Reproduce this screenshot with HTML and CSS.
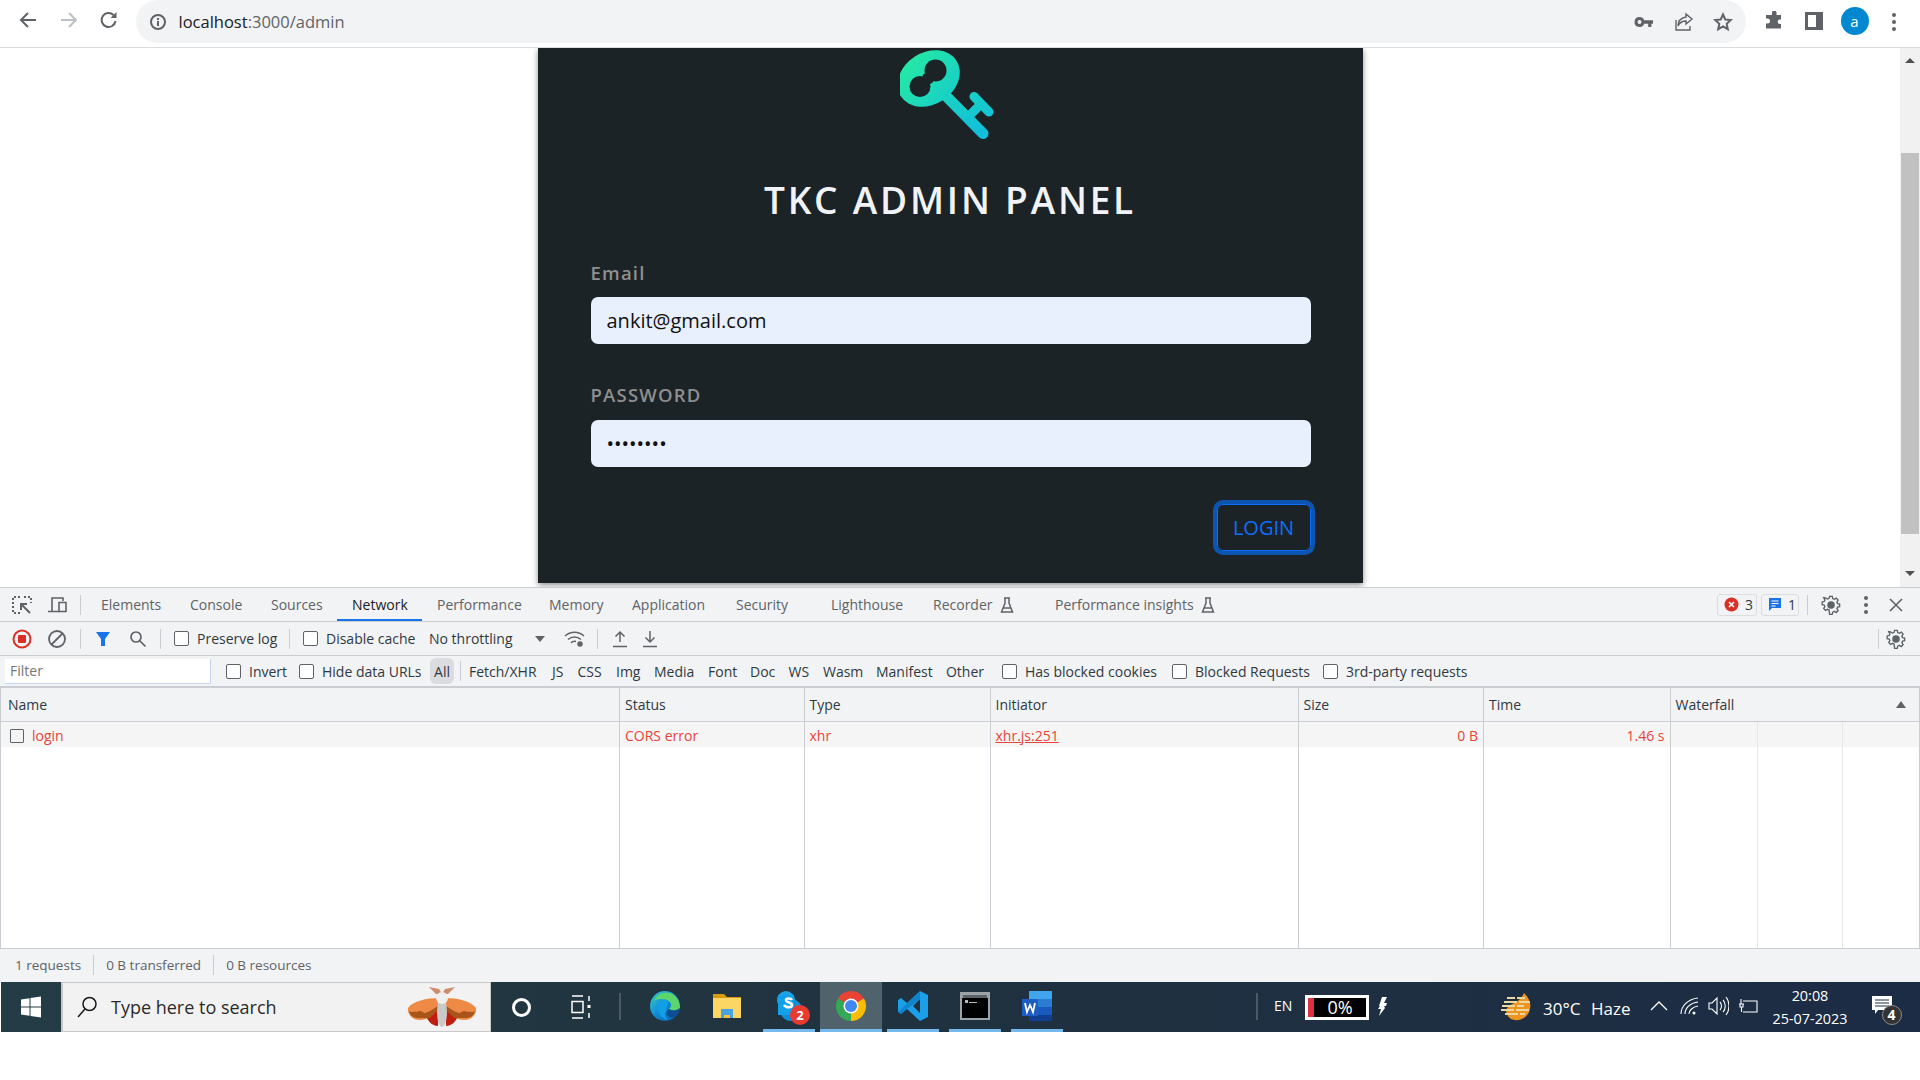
FILE: index.html
```html
<!DOCTYPE html>
<html lang="en">
<head>
  <meta charset="UTF-8" />
  <title>TKC Admin Panel</title>
  <link rel="stylesheet" href="styles.css">
</head>
<body>
  <header class="chrome">
    <span class="nav-btn"><svg width="20" height="20" viewBox="0 0 20 20" fill="none" stroke="#5f6368" stroke-width="2"><path d="M18 10H3M10 3l-7 7 7 7"/></svg></span>
    <span class="nav-btn"><svg width="20" height="20" viewBox="0 0 20 20" fill="none" stroke="#bdc1c6" stroke-width="2"><path d="M2 10h15M10 3l7 7-7 7"/></svg></span>
    <span class="nav-btn"><svg width="20" height="20" viewBox="0 0 20 20" fill="none" stroke="#5f6368" stroke-width="2"><path d="M16.5 11a7 7 0 1 1-2-6"/><path d="M17.5 2v6h-6z" fill="#5f6368" stroke="none"/></svg></span>
    <div class="omnibox">
      <svg class="omni-info" width="18" height="18" viewBox="0 0 18 18" fill="none" stroke="#5f6368" stroke-width="2"><circle cx="9" cy="9" r="7"/><path d="M9 8v5M9 5v2"/></svg>
      <span class="url">localhost<span class="url-rest">:3000/admin</span></span>
      <svg class="omni-key" width="20" height="12" viewBox="0 0 20 12" fill="#5f6368"><path d="M5.5 1a5 5 0 0 1 4.7 3.2H19v3.6h-1.6V11h-3.2V7.8h-4A5 5 0 1 1 5.500 1zm0 3a2 2 0 1 0 0 4 2 2 0 0 0 0-4z"/></svg>
      <svg class="omni-share" width="20" height="20" viewBox="0 0 20 20" fill="none" stroke="#5f6368" stroke-width="1.400"><path d="M2 8v10h14v-4"/><path d="M12 2l6 5-6 5V9c-4 0-6 1-8 5 0-5 3-8 8-9z"/></svg>
      <svg class="omni-star" width="20" height="20" viewBox="0 0 20 20" fill="none" stroke="#5f6368" stroke-width="2"><path d="M10 2.500l2.300 5 5.400.6-4 3.700 1.100 5.400L10 14.500l-4.800 2.700 1.100-5.400-4-3.700 5.400-.6z"/></svg>
    </div>
    <span class="chrome-btn chrome-btn-first"><svg width="20" height="20" viewBox="0 0 20 20" fill="#5f6368"><path d="M8 1.500a2.300 2.300 0 0 1 4.500 0V4H17v4.500h-1.500a2.300 2.300 0 0 0 0 4.500H17v4.500H2v-5h1.500a2.500 2.500 0 0 0 0-5H2V4h6z"/></svg></span>
    <span class="chrome-btn"><svg width="18" height="18" viewBox="0 0 18 18"><path d="M0 0h18v18H0z" fill="#5f6368"/><path d="M3 3h8v12H3z" fill="#fff"/></svg></span>
    <span class="avatar">a</span>
    <span class="chrome-dots"><i></i><i></i><i></i></span>
  </header>

  <div class="viewport">
    <main class="page">
      <section class="card">
        <svg class="logo" width="94" height="89" viewBox="0 0 94 89">
          <defs><linearGradient id="keyFill" gradientUnits="userSpaceOnUse" x1="30" y1="0" x2="60" y2="89"><stop offset="0" stop-color="#24e8a6"/><stop offset="1" stop-color="#11bedb"/></linearGradient></defs>
          <g fill="none" stroke="url(#keyFill)" stroke-linecap="round">
            <path stroke-width="11" d="M46 46 83 83.500"/>
            <path stroke-width="9" d="M74 46.500 89 62M68 67l11-11"/>
          </g>
          <ellipse cx="28.700" cy="28.500" rx="33" ry="26" transform="rotate(-33 28.700 28.500)" fill="url(#keyFill)"/>
          <g fill="#1c2327"><circle cx="35.500" cy="20.500" r="11"/><circle cx="20" cy="36.500" r="10.500"/><circle cx="28" cy="28.500" r="6"/></g>
        </svg>
        <h1 class="card-title">TKC ADMIN PANEL</h1>
        <form class="login-form">
          <label class="field-label" for="email">Email</label>
          <input class="field-input" id="email" type="text" value="ankit@gmail.com" />
          <label class="field-label field-label-pw" for="pw">PASSWORD</label>
          <input class="field-input field-input-pw" id="pw" type="password" value="12345678" />
          <div class="form-actions"><button class="login-btn" type="button">LOGIN</button></div>
        </form>
      </section>
    </main>
    <div class="scrollbar">
      <span class="arrow-up"></span>
      <div class="thumb"></div>
      <span class="arrow-down"></span>
    </div>
  </div>

  <section class="devtools">
    <div class="dt-tabs">
      <div class="dt-tools">
        <svg width="20" height="20" viewBox="0 0 20 20" fill="none" stroke="#5f6368"><path stroke-width="2" stroke-dasharray="2 2" d="M8 2H1v16h7M12 2h7v6"/><path stroke-width="2" d="M9 9l9 9M9 15V9h6"/></svg>
        <svg width="20" height="20" viewBox="0 0 20 20" fill="none" stroke="#5f6368" stroke-width="1.600"><path d="M5 16V3h11v3M1 16.500h11"/><path d="M12 7.500h7v9h-7z"/></svg>
        <span class="dt-sep"></span>
      </div>
      <div class="tab-list">
        <span class="tab">Elements</span>
        <span class="tab">Console</span>
        <span class="tab">Sources</span>
        <span class="tab tab-active">Network</span>
        <span class="tab">Performance</span>
        <span class="tab">Memory</span>
        <span class="tab">Application</span>
        <span class="tab">Security</span>
        <span class="tab">Lighthouse</span>
        <span class="tab">Recorder<svg class="flask" width="14" height="16" viewBox="0 0 14 16" fill="none" stroke="#5f6368" stroke-width="1.500"><path d="M4 1h6M5 1v5L1.500 15h11L9 6V1M3.500 11h7"/></svg></span>
        <span class="tab">Performance insights<svg class="flask" width="14" height="16" viewBox="0 0 14 16" fill="none" stroke="#5f6368" stroke-width="1.500"><path d="M4 1h6M5 1v5L1.500 15h11L9 6V1M3.500 11h7"/></svg></span>
      </div>
      <div class="dt-right">
        <span class="count-badge count-err"><svg width="15" height="15" viewBox="0 0 15 15"><circle cx="7.500" cy="7.500" r="7" fill="#d93025"/><path d="M5 5l5 5M10 5l-5 5" stroke="#fff" stroke-width="1.600"/></svg>3</span>
        <span class="count-badge count-msg"><svg width="14" height="15" viewBox="0 0 14 15"><path d="M1 1h12v10H4l-3 3z" fill="#1a73e8"/><path d="M3.500 4h7M3.500 6.500h7M3.500 9h4" stroke="#fff"/></svg>1</span>
        <span class="dt-sep dt-sep-right"></span>
        <span class="dt-icon dt-gear"><svg width="20" height="20" viewBox="0 0 20 20" fill="none" stroke="#5f6368" stroke-width="1.500"><path d="M8.500 1.500h3l.5 2.500 1.800.8 2.200-1.300 2 2.200-1.300 2.100.7 1.700 2.300.5v3l-2.300.5-.7 1.700 1.300 2.100-2 2.200-2.200-1.300-1.800.8-.5 2.500h-3L8 16.700l-1.800-.8L4 17.200l-2-2.200 1.300-2.100-.7-1.700-2.300-.5v-3l2.300-.5.7-1.700L2 2.900l2 .3 2.200 1.300L8 3.700z" transform="scale(.9) translate(1 0)"/><circle cx="10" cy="10" r="3" fill="#5f6368"/></svg></span>
        <span class="dt-icon dt-more"><i></i><i></i><i></i></span>
        <span class="dt-icon dt-close"><svg width="14" height="14" viewBox="0 0 14 14" stroke="#5f6368" stroke-width="1.600"><path d="M1 1l12 12M13 1L1 13"/></svg></span>
      </div>
    </div>

    <div class="dt-toolbar">
      <span class="dt-icon"><svg width="20" height="20" viewBox="0 0 20 20"><circle cx="10" cy="10" r="8.500" fill="none" stroke="#d93025" stroke-width="2"/><rect x="6" y="6" width="8" height="8" rx="1" fill="#d93025"/></svg></span>
      <span class="dt-icon"><svg width="20" height="20" viewBox="0 0 20 20" fill="none" stroke="#5f6368" stroke-width="1.800"><circle cx="10" cy="10" r="8"/><path d="M15.500 4.500l-11 11"/></svg></span>
      <span class="dt-icon"><span class="dt-sep"></span></span>
      <span class="dt-icon"><svg width="16" height="16" viewBox="0 0 16 16" fill="#1a73e8"><path d="M1 1h14L10 8v7H6V8z"/></svg></span>
      <span class="dt-icon"><svg width="18" height="18" viewBox="0 0 18 18" fill="none" stroke="#5f6368" stroke-width="1.700"><circle cx="7" cy="7" r="5"/><path d="M10.500 10.500l6 6"/></svg></span>
      <span class="dt-icon"><span class="dt-sep"></span></span>
      <label class="check check-pad"><input type="checkbox" />Preserve log</label>
      <span class="dt-icon"><span class="dt-sep"></span></span>
      <label class="check check-pad"><input type="checkbox" />Disable cache</label>
      <span class="throttle">No throttling</span>
      <span class="caret"></span>
      <span class="dt-icon dt-wifi"><svg width="22" height="18" viewBox="0 0 22 18" fill="none" stroke="#5f6368" stroke-width="1.500"><path d="M1 6a14 14 0 0 1 19 0M4 9.500a10 10 0 0 1 13 0M7 13a5 5 0 0 1 5-1.500"/><circle cx="16" cy="14" r="2" fill="#5f6368"/></svg></span>
      <span class="dt-icon"><span class="dt-sep"></span></span>
      <span class="dt-icon"><svg width="16" height="18" viewBox="0 0 16 18" fill="none" stroke="#5f6368" stroke-width="1.500"><path d="M8 12V2M3.500 6.500L8 2l4.500 4.500M1 16.500h14"/></svg></span>
      <span class="dt-icon"><svg width="16" height="18" viewBox="0 0 16 18" fill="none" stroke="#5f6368" stroke-width="1.500"><path d="M8 1v11M3.500 7.500L8 12l4.500-4.500M1 16.500h14"/></svg></span>
      <span></span>
      <span class="dt-icon"><span class="dt-sep"></span></span>
      <span class="dt-icon"><svg width="20" height="20" viewBox="0 0 20 20" fill="none" stroke="#5f6368" stroke-width="1.500"><path d="M8.500 1.500h3l.5 2.500 1.800.8 2.200-1.300 2 2.200-1.300 2.100.7 1.700 2.300.5v3l-2.300.5-.7 1.700 1.300 2.100-2 2.200-2.200-1.300-1.800.8-.5 2.500h-3L8 16.700l-1.800-.8L4 17.200l-2-2.200 1.300-2.100-.7-1.700-2.300-.5v-3l2.300-.5.7-1.700L2 2.900l2 .3 2.200 1.300L8 3.700z" transform="scale(.9) translate(1 0)"/><circle cx="10" cy="10" r="3" fill="#5f6368"/></svg></span>
    </div>

    <div class="dt-filter">
      <input class="filter-input" type="text" placeholder="Filter" />
      <label class="check check-pad-lg"><input type="checkbox" />Invert</label>
      <label class="check"><input type="checkbox" />Hide data URLs</label>
      <span class="type-all">All</span>
      <span class="dt-icon"><span class="dt-sep"></span></span>
      <span class="type">Fetch/XHR</span>
      <span class="type">JS</span>
      <span class="type">CSS</span>
      <span class="type">Img</span>
      <span class="type">Media</span>
      <span class="type">Font</span>
      <span class="type">Doc</span>
      <span class="type">WS</span>
      <span class="type">Wasm</span>
      <span class="type">Manifest</span>
      <span class="type">Other</span>
      <label class="check"><input type="checkbox" />Has blocked cookies</label>
      <label class="check"><input type="checkbox" />Blocked Requests</label>
      <label class="check"><input type="checkbox" />3rd-party requests</label>
    </div>

    <table class="net-table">
      <colgroup>
        <col class="col-name"><col class="col-status"><col class="col-type"><col class="col-init"><col class="col-size"><col class="col-time"><col>
      </colgroup>
      <thead>
        <tr>
          <th>Name</th><th>Status</th><th>Type</th><th>Initiator</th><th>Size</th><th>Time</th>
          <th><span class="th-flex">Waterfall<span class="sort-up"></span></span></th>
        </tr>
      </thead>
      <tbody>
        <tr class="row-err">
          <td><span class="row-check"></span>login</td><td>CORS error</td><td>xhr</td><td><u>xhr.js:251</u></td>
          <td class="num">0 B</td><td class="num">1.46 s</td><td class="fall"></td>
        </tr>
        <tr class="row-fill"><td></td><td></td><td></td><td></td><td></td><td></td><td class="fall"></td></tr>
      </tbody>
    </table>

    <div class="dt-status">
      <span>1 requests</span><span>0 B transferred</span><span>0 B resources</span>
    </div>
  </section>

  <footer class="taskbar">
    <span class="tb-start"><svg width="22" height="22" viewBox="0 0 22 22" fill="#fff"><path d="M1 3.500l8.500-1.200V10.500H1zM10.500 2.100L21 .6v9.900H10.500zM1 11.500h8.500v8.200L1 18.500zM10.500 11.500H21v9.900l-10.500-1.500z"/></svg></span>
    <div class="tb-search">
      <svg width="22" height="24" viewBox="0 0 22 24" fill="none" stroke="#1a1a1a" stroke-width="1.500"><circle cx="13.500" cy="9" r="6.500"/><path d="M9 14l-7 8"/></svg>
      <span class="tb-search-text">Type here to search</span>
      <svg class="moth" width="70" height="42" viewBox="0 0 70 42">
        <path d="M29 8 22 1l10 2 3 5zM41 8l7-7-10 2-3 5z" fill="#d08a6c"/>
        <path d="M31 12C20 12 6 15 1 22c-1 6 4 12 12 12 8 0 14-6 18-12zM39 12c11 0 25 3 30 10 1 6-4 12-12 12-8 0-14-6-18-12z" fill="#ee8a45"/>
        <path d="M31 21c-6 4-10 7-11 11 2 5 7 8 11 8zM39 21c6 4 10 7 11 11-2 5-7 8-11 8z" fill="#c11d10"/>
        <path d="M2 25c3 2 5 0 8 1 2-2 5-1 7 1 3 0 6-2 14-7v4l-8 8H12C7 32 3 30 2 25zM68 25c-3 2-5 0-8 1-2-2-5-1-7 1-3 0-6-2-14-7v4l8 8h11c5 0 9-2 10-7z" fill="#a8541a"/>
        <ellipse cx="35" cy="26" rx="5" ry="15" fill="#c9c9c9"/>
        <circle cx="35" cy="12" r="6" fill="#efefef"/>
      </svg>
    </div>
    <span class="tb-cell"><span class="cortana"></span></span>
    <span class="tb-cell"><svg width="20" height="24" viewBox="0 0 20 24" fill="none" stroke="#fff" stroke-width="1.500"><path d="M1 1h11M1 6.500h11v11H1zM1 23h11M18 1v5M18 18v5"/><path d="M16.500 10h3v3h-3z" fill="#fff" stroke="none"/></svg></span>
    <span class="tb-sep"></span>
    <div class="tb-apps">
      <span class="tb-app"><svg width="32" height="32" viewBox="0 0 32 32"><defs><linearGradient id="edgeFill" x1="0" y1="0" x2="1" y2="1"><stop offset="0" stop-color="#3ad0c8"/><stop offset=".5" stop-color="#0e8ad8"/><stop offset="1" stop-color="#0c59a4"/></linearGradient></defs><circle cx="16" cy="16" r="15" fill="url(#edgeFill)"/><path d="M5 11C8 3 18 0 25 5c5 4 6 9 6 13-3 3-9 3-11 1 3-2 3-7-2-9C12 8 7 9 5 11z" fill="#5bd66c"/><path d="M18 10c-6-1-10 4-9 10 1 5 5 9 10 10-3-3-4-6-2-9 0-4 3-8 1-11z" fill="#11a0e5"/><path d="M20 19c-3 2-3 4-2 6 2 2 6 4 9 1 2-2 3-5 4-8-3 3-8 3-11 1z" fill="#0c4f94"/></svg></span>
      <span class="tb-app"><svg width="30" height="30" viewBox="0 0 30 30"><path d="M1 3h11l3 3h14v6H1z" fill="#d79a10"/><path d="M1 7h28v20H1z" fill="#fcd664"/><path d="M9 27v-9h12v9h-3v-3h-6v3z" fill="#4aa3e0"/><path d="M12 24h6v3h-6z" fill="#f3c338"/></svg></span>
      <span class="tb-app tb-app-on"><span class="app-wrap"><svg width="30" height="32" viewBox="0 0 30 32"><circle cx="12" cy="10" r="9" fill="#1fa3e6"/><circle cx="17" cy="20" r="11" fill="#0e8fd8"/><path d="M4 5h16v20H4z" fill="#12a0e8"/><path d="M18 10c-1-2-6-2-6 0 0 3 6 2 6 5 0 3-6 3-8 0" fill="none" stroke="#fff" stroke-width="2.500"/></svg><span class="app-badge">2</span></span></span>
      <span class="tb-app tb-app-on tb-app-active"><svg width="32" height="32" viewBox="0 0 32 32"><path d="M16 16 3 8.500A15 15 0 0 1 29 8.500z" fill="#ea4335"/><path d="M16 16 29 8.500A15 15 0 0 1 16 31z" fill="#fbbc05"/><path d="M16 16V31A15 15 0 0 1 3 8.500z" fill="#34a853"/><circle cx="16" cy="16" r="7.500" fill="#fff"/><circle cx="16" cy="16" r="6" fill="#4285f4"/></svg></span>
      <span class="tb-app tb-app-on"><svg width="32" height="32" viewBox="0 0 32 32"><path d="M23 1l8 4v22l-8 4-13-12-6 5-3-2V10l3-2 6 5zM23 9l-7 7 7 7z" fill="#1a9fe8"/><path d="M23 1v8l-13 10-6 5-3-2z" fill="#0d7ac2" opacity=".7"/></svg></span>
      <span class="tb-app tb-app-on"><svg width="30" height="28" viewBox="0 0 30 28"><path d="M0 0h30v28H0z" fill="#9ba3a8"/><path d="M2 6h26v20H2z" fill="#000"/><path d="M3 3h24v3H3z" fill="#5b6268"/><path d="M5 8h3v3H5zM9 10h8v1H9z" fill="#b9b9b9"/></svg></span>
      <span class="tb-app tb-app-on"><svg width="32" height="32" viewBox="0 0 32 32"><path d="M8 1h23v8H8z" fill="#41a5ee"/><path d="M8 9h23v8H8z" fill="#2b7cd3"/><path d="M8 17h23v8H8z" fill="#185abd"/><path d="M8 25h23v6H8z" fill="#103f91"/><path d="M1 9h16v17H1z" fill="#1d5cc0"/><path d="M4 13l2 9 3-7 3 7 2-9" fill="none" stroke="#fff" stroke-width="1.800"/></svg></span>
    </div>
    <span class="tb-sep tb-sep-tray"></span>
    <div class="tray">
      <span class="tray-lang">EN</span>
      <span class="battery"><span class="battery-level"></span><span class="battery-text">0%</span></span>
      <svg class="bolt" width="9" height="19" viewBox="0 0 9 19" fill="#fff"><path d="M4 0h5L6 6h3l-1 3H6l1 2-6 8 2-7H0l2-3H1z"/></svg>
      <svg class="weather" width="31" height="28" viewBox="0 0 31 28"><path d="M23 0c6 6 8 12 5 19-3 7-12 10-18 7-3-2-4-4-5-8 2-9 13-6 18-18z" fill="#ee9420"/><path d="M6 5h8M16 5h8M3 9h26M1 13h22M0 17h30M4 21h20" stroke="#e9d8a0" stroke-width="2" stroke-dasharray="13 2"/></svg>
      <span class="tray-temp">30°C</span>
      <span class="tray-temp">Haze</span>
      <svg class="chev" width="18" height="10" viewBox="0 0 18 10" fill="none" stroke="#fff" stroke-width="1.300"><path d="M1 9l8-8 8 8"/></svg>
      <svg class="tray-wifi" width="20" height="18" viewBox="0 0 20 18" fill="none" stroke="#fff" stroke-width="1.100"><path d="M1 17C1 9 8 2 18 1M5 17c0-6 5-11 13-12M9 17c0-3 3-7 9-8"/><circle cx="14" cy="16" r="1.500" fill="#fff" stroke="none"/></svg>
      <svg class="tray-vol" width="21" height="20" viewBox="0 0 21 20" fill="none" stroke="#fff" stroke-width="1.100"><path d="M1 7h3l5-5v16l-5-5H1zM12 6c2 2 2 6 0 8M15 4c3 3 3 9 0 12M18 1c4 5 4 13 0 18"/></svg>
      <svg class="tray-plug" width="20" height="16" viewBox="0 0 20 16" fill="none" stroke="#fff" stroke-width="1.100"><path d="M5 3h14v11H5M1 6h5M3 1v5M2 6v3h3V6M3.500 9v5"/></svg>
      <div class="clock"><span>20:08</span><span>25-07-2023</span></div>
      <div class="notify">
        <svg width="20" height="18" viewBox="0 0 20 18"><path d="M0 0h20v14H6l-3 4v-4H0z" fill="#fff"/><path d="M3 4h14M3 7h14M3 10h14" stroke="#1c2c42"/></svg>
        <span class="notify-badge">4</span>
      </div>
    </div>
  </footer>
</body>
</html>
```

FILE: styles.css
```css
* { box-sizing: border-box; }
html, body { margin: 0; padding: 0; }
body {
  width: 1920px;
  height: 1080px;
  overflow: hidden;
  background: #fff;
  font-family: "Open Sans", "Noto Sans", sans-serif;
}

/* browser bar */
.chrome {
  height: 48px;
  display: flex;
  align-items: flex-start;
  background: #fff;
  border-bottom: 1px solid #dadce0;
  padding-left: 8px;
}
.nav-btn {
  width: 40.500px;
  height: 40px;
  display: flex;
  align-items: center;
  justify-content: center;
}
.omnibox {
  margin-left: 6px;
  width: 1610px;
  height: 43px;
  background: #f1f3f4;
  border-radius: 22px;
  display: flex;
  align-items: center;
  padding-left: 13px;
}
.url {
  margin-left: 12px;
  font-size: 16.500px;
  color: #202124;
  width: 1400px;
}
.url-rest { color: #5f6368; }
.omni-key { margin-left: 55px; }
.omni-share { margin-left: 20px; }
.omni-star { margin-left: 19px; }
.chrome-btn {
  width: 40px;
  height: 42px;
  display: flex;
  align-items: center;
  justify-content: center;
}
.chrome-btn-first { margin-left: 8px; }
.avatar {
  width: 28px;
  height: 28px;
  margin: 7px 0 0 7px;
  border-radius: 50%;
  background: #0288d1;
  color: #fff;
  font-size: 15px;
  display: flex;
  align-items: center;
  justify-content: center;
}
.chrome-dots {
  margin: 13px 0 0 23px;
  display: flex;
  flex-direction: column;
  gap: 3px;
}
.chrome-dots i, .dt-more i {
  width: 4px;
  height: 4px;
  border-radius: 50%;
  background: #5f6368;
  display: block;
}

/* page area */
.viewport {
  height: 539px;
  display: flex;
  overflow: hidden;
}
.page { flex: 1; }
.card {
  width: 825px;
  height: 535px;
  margin: 0 auto;
  padding-top: 2px;
  background: #1c2327;
  box-shadow: 0 2px 6px rgba(0, 0, 0, 0.45);
}
.logo { display: block; margin-left: 362px; }
.card-title {
  margin: 37px 0 0;
  text-align: center;
  color: #f1f3f8;
  font-size: 37px;
  line-height: 48px;
  font-weight: 600;
  letter-spacing: 2.800px;
}
.login-form { padding: 0 53px; margin-top: 37px; }
.field-label {
  display: block;
  color: #8f8f8f;
  font-size: 18.500px;
  line-height: 24px;
  font-weight: 600;
  letter-spacing: 1.200px;
}
.field-label-pw { margin-top: 39px; }
.field-input {
  display: block;
  width: 720px;
  height: 47px;
  margin-top: 12px;
  padding: 0 16px;
  border: none;
  border-radius: 7px;
  outline: none;
  background: #e8f0fe;
  color: #111;
  font-family: inherit;
  font-size: 20px;
}
.field-input-pw { margin-top: 13px; }
.form-actions { display: flex; justify-content: flex-end; margin: 37px -1px 0 0; }
.login-btn {
  width: 94px;
  height: 47px;
  padding: 0;
  border: 1px solid #0d6efd;
  border-radius: 6px;
  outline: 4px solid #0b55b0;
  background: transparent;
  color: #0d6efd;
  font-family: inherit;
  font-size: 20px;
}
.scrollbar {
  width: 20px;
  background: #f1f1f1;
  display: flex;
  flex-direction: column;
  align-items: center;
}
.arrow-up, .arrow-down {
  width: 0;
  height: 0;
  border-left: 5px solid transparent;
  border-right: 5px solid transparent;
}
.arrow-up { margin-top: 10px; border-bottom: 5px solid #505050; }
.arrow-down { margin-top: 37px; border-top: 5px solid #505050; }
.thumb { width: 18px; height: 381px; margin-top: 90px; background: #c1c1c1; }

/* devtools */
.devtools {
  height: 395px;
  background: #f1f3f4;
  color: #303942;
  font-size: 14px;
}
.dt-tabs {
  height: 35px;
  display: flex;
  border-top: 1px solid #cacdd1;
  border-bottom: 1px solid #cacdd1;
  color: #5f6368;
}
.dt-tools {
  width: 86px;
  display: flex;
  align-items: center;
  padding-left: 12px;
  gap: 15px;
}
.dt-sep {
  width: 1px;
  height: 20px;
  background: #cacdd1;
  display: block;
}
.dt-tools .dt-sep { margin-left: -2px; }
.tab-list {
  display: grid;
  grid-template-columns: 89px 81px 81px 85px 112px 83px 104px 95px 102px 122px 300px;
}
.tab {
  padding-left: 15px;
  display: flex;
  align-items: center;
  white-space: nowrap;
  height: 33px;
}
.tab-active {
  color: #202124;
  border-bottom: 2px solid #1a73e8;
  padding-top: 2px;
}
.flask { margin-left: 7px; }
.dt-right {
  margin-left: auto;
  padding-right: 17px;
  display: flex;
  align-items: center;
  height: 33px;
}
.count-badge {
  height: 22px;
  border: 1px solid #dadce0;
  border-radius: 3px;
  display: flex;
  align-items: center;
  gap: 6px;
  padding-left: 6px;
  color: #303942;
}
.count-err { width: 40px; margin-right: 4px; }
.count-msg { width: 38px; }
.dt-sep-right { margin-left: 8px; }
.dt-icon {
  display: flex;
  align-items: center;
  justify-content: center;
}
.dt-gear { width: 20px; margin-left: 13px; }
.dt-more { margin-left: 23px; width: 4px; flex-direction: column; gap: 3px; }
.dt-close { margin-left: 21px; }

.dt-toolbar {
  height: 34px;
  display: grid;
  grid-template-columns: 43px 28px 18px 28px 41px 4px 125px 4px 138px 105px 12px 44px 14px 32px 28px 1fr 8px 28px 10px;
  align-items: center;
  border-bottom: 1px solid #cacdd1;
}
.dt-wifi { justify-content: flex-end; padding-right: 4px; }
.check {
  display: flex;
  align-items: center;
  white-space: nowrap;
}
.check input {
  appearance: none;
  width: 15px;
  height: 15px;
  margin: 0 8px 0 0;
  background: #fff;
  border: 1px solid #5f6368;
  border-radius: 2px;
  flex: none;
}
.check-pad { padding-left: 12px; }
.check-pad-lg { padding-left: 15px; }
.throttle { white-space: nowrap; }
.caret {
  width: 0;
  height: 0;
  justify-self: center;
  border-left: 5px solid transparent;
  border-right: 5px solid transparent;
  border-top: 6px solid #5f6368;
}

.dt-filter {
  height: 30px;
  padding-left: 5px;
  display: grid;
  grid-template-columns: 206px 88px 131px 24px 12px 83px 25.500px 38.500px 38px 54px 42px 38.600px 34.400px 53px 70px 59px 170px 151px 1fr;
  align-items: center;
}
.filter-input {
  height: 25px;
  padding: 0 5px;
  border: none;
  border-bottom: 1px solid #c6d6f2;
  border-right: 1px solid #c6d6f2;
  background: #fff;
  outline: none;
  font-family: inherit;
  font-size: 14px;
}
.filter-input::placeholder { color: #757575; }
.type-all {
  height: 26px;
  border-radius: 6px;
  background: #dadce0;
  display: flex;
  align-items: center;
  justify-content: center;
}
.type { padding-left: 3px; }

.net-table {
  width: 1920px;
  height: 263px;
  table-layout: fixed;
  border-collapse: collapse;
  border-top: 2px solid #cacdd1;
  border-bottom: 1px solid #cacdd1;
  border-left: 1px solid #cacdd1;
  background: #fff;
}
.col-name { width: 619px; }
.col-status { width: 184.500px; }
.col-type { width: 186px; }
.col-init { width: 308px; }
.col-size { width: 185.500px; }
.col-time { width: 186.500px; }
.net-table th, .net-table td {
  padding: 0 5px;
  border-right: 1px solid #cacdd1;
  text-align: left;
  font-weight: 400;
  white-space: nowrap;
}
.net-table th:first-child { padding-left: 7px; }
.net-table th {
  height: 34px;
  background: #f1f3f4;
  color: #303942;
  border-bottom: 1px solid #cacdd1;
}
.th-flex { display: flex; justify-content: space-between; align-items: center; padding-right: 8px; }
.sort-up {
  width: 0;
  height: 0;
  border-left: 5px solid transparent;
  border-right: 5px solid transparent;
  border-bottom: 7px solid #5f6368;
}
.row-err { height: 26px; background: #f5f5f5; color: #ea4335; }
.row-err td { padding-top: 2px; }
.row-err td:first-child { padding-left: 9px; }
.row-check {
  display: inline-block;
  width: 14px;
  height: 14px;
  margin-right: 8px;
  border: 1px solid #5f6368;
  border-radius: 1px;
  vertical-align: -2px;
}
.num { text-align: right !important; }
.fall {
  background:
    linear-gradient(#e6e6e6, #e6e6e6) 86px 0 / 1px 100% no-repeat,
    linear-gradient(#e6e6e6, #e6e6e6) 171px 0 / 1px 100% no-repeat;
}

.dt-status {
  height: 33px;
  display: flex;
  align-items: center;
  padding: 0 0 2px 3px;
  color: #5f6368;
  font-size: 13.500px;
}
.dt-status span { padding: 0 12px; border-right: 1px solid #cacdd1; line-height: 20px; }
.dt-status span:last-child { border-right: none; }

/* windows taskbar */
.taskbar {
  height: 50px;
  margin-left: 1px;
  display: flex;
  background: linear-gradient(to right, #243c45, #20323f 45%, #1c2c45);
  color: #fff;
}
.tb-start {
  width: 60px;
  display: flex;
  align-items: center;
  justify-content: center;
}
.tb-search {
  width: 430px;
  background: #f2f2f2;
  border: 2px solid #c8c8c8;
  border-width: 1px 1px 1px 2px;
  display: flex;
  align-items: center;
  padding-left: 13px;
  color: #2b2b2b;
}
.tb-search-text { margin-left: 13px; width: 296px; font-size: 18px; white-space: nowrap; }
.tb-cell {
  width: 60px;
  display: flex;
  align-items: center;
  justify-content: center;
}
.cortana {
  width: 19px;
  height: 19px;
  border: 3px solid #fff;
  border-radius: 50%;
}
.tb-sep {
  width: 2px;
  height: 27px;
  margin: 11px 0 0 8px;
  background: #4b5a66;
}
.tb-apps { margin-left: 13px; display: flex; }
.tb-app {
  width: 62px;
  display: flex;
  align-items: center;
  justify-content: center;
  padding-bottom: 2px;
  position: relative;
}
.tb-app-on::after {
  content: "";
  position: absolute;
  left: 5px;
  right: 5px;
  bottom: 0;
  height: 3px;
  background: #76b9ed;
}
.tb-app-active { background: #50626b; }
.tb-app-active::after { left: 0; right: 0; }
.app-wrap { position: relative; display: flex; }
.app-badge {
  position: absolute;
  right: -6px;
  bottom: -3px;
  width: 20px;
  height: 20px;
  border-radius: 50%;
  background: #ea3a2f;
  color: #fff;
  font-size: 13px;
  font-weight: 700;
  display: flex;
  align-items: center;
  justify-content: center;
}
.tb-sep-tray { margin-left: 187.500px; }
.tray {
  flex: 1;
  display: grid;
  grid-template-columns: 31px 73px 123px 42px 48px 50px 35px 28px 29px 30px 94px 49px;
  align-items: center;
  padding-left: 16.500px;
}
.tray-lang { font-size: 14px; margin-top: -4px; }
.battery {
  width: 64px;
  height: 25px;
  border: 3px solid #fff;
  background: #000;
  display: flex;
}
.battery-level { width: 6px; background: #dc3040; }
.battery-text { flex: 1; text-align: center; font-size: 18px; line-height: 19px; }
.bolt { margin-top: -2px; }
.weather { margin-top: -1px; }
.tray-temp { font-size: 17px; white-space: nowrap; margin-top: 2px; }
.chev { justify-self: center; margin-top: -2px; }
.tray-wifi, .tray-vol, .tray-plug { justify-self: center; margin-top: -2px; }
.clock {
  display: flex;
  flex-direction: column;
  align-items: center;
  gap: 4px;
  font-size: 14.400px;
  line-height: 19px;
  white-space: nowrap;
}
.notify { position: relative; justify-self: center; margin-top: -5px; display: flex; }
.notify-badge {
  position: absolute;
  left: 10px;
  top: 9px;
  width: 20px;
  height: 20px;
  border-radius: 50%;
  border: 1px solid #8c8c8c;
  background: #333;
  font-size: 14px;
  font-weight: 700;
  display: flex;
  align-items: center;
  justify-content: center;
}
```
